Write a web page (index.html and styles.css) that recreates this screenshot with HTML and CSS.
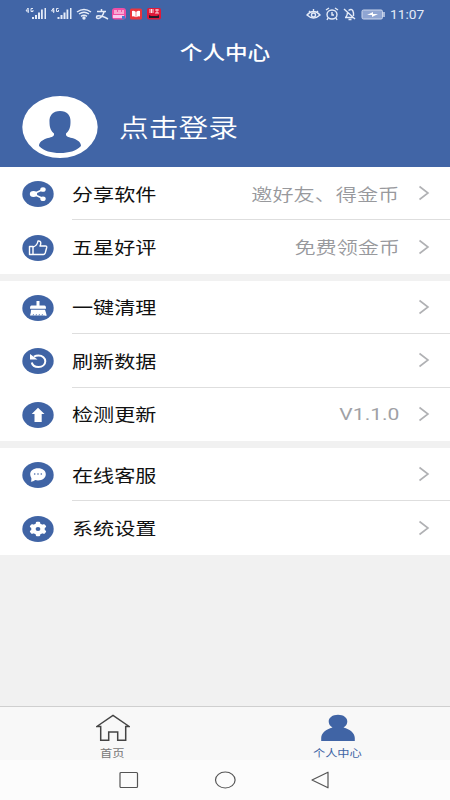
FILE: index.html
```html
<!DOCTYPE html>
<html lang="zh-CN">
<head>
<meta charset="utf-8">
<title>个人中心</title>
<link rel="stylesheet" href="styles.css">
</head>
<body>
<div class="phone">
  <header class="header">
    <div class="status">
      <svg class="status-left" width="140" height="16" viewBox="0 0 140 16">
        <g fill="#e4ebf8">
          <g id="signal">
            <path d="M7 11h2v2h-2zM10 9h2v4h-2zM13 6.500h2v6.500h-2zM16 3.500h1.800v9.500h-1.800zM19.500 2h1.500v11h-1.500z"/>
            <path d="M3 2 1 5h3M3.200 2v5M8 2.500h-2v3h2v-1.500" fill="none" stroke="#e4ebf8"/>
          </g>
          <use href="#signal" x="25.500"/>
          <circle cx="59" cy="12" r="1.700"/>
        </g>
        <path d="M52 6q7-5 14 0M54 8q5-3.500 10 0M56 10.300q3-2 6 0" fill="none" stroke="#e4ebf8" stroke-width="1.500"/>
        <path d="M72 5.500h9M76.500 3v2.500M79 6q-2 6-5.500 6.500-3 0-1.500-2.500 4-1 11 3" fill="none" stroke="#e4ebf8" stroke-width="1.500"/>
        <rect x="87" y="2" width="14" height="11.500" rx="3" fill="#ef4fa5"/>
        <path d="M89 5h3M93 5h3M97 5h2M89 7h10" stroke="#fff" stroke-width="1.200"/>
        <path d="M88 10.500h11" stroke="#f8c8ed" stroke-width="3"/>
        <path d="M97 10h3v3h-3z" fill="#4a78d0"/>
        <rect x="105" y="2.500" width="12" height="11" rx="1.500" fill="#e9363d"/>
        <path d="M107 5q2-.5 3.700.8v5.400q-2-1.200-3.700-.7zM115 5q-2-.5-3.700.8v5.400q2-1.200 3.700-.7z" fill="#fff"/>
        <rect x="122" y="2" width="14" height="11.500" rx="2" fill="#df1939"/>
        <path d="M124 4h5M124 6h5M126.500 3v4M130 4h4M130 7h4M132 3v4" stroke="#fff" stroke-width=".8"/>
        <path d="M124 12v-3l2 1h6l2-1v3z" fill="#201c2b"/>
      </svg>
      <div class="status-right">
        <svg width="80" height="16" viewBox="0 0 80 16">
          <g fill="none" stroke="#e4ebf8" stroke-width="1.400">
            <path d="M1 9q6.500-7 13 0-6.500 6-13 0zM3 5l1.500 1.500M7.500 3v2M12 5l-1.500 1.500"/>
            <circle cx="7.500" cy="9" r="2"/>
            <ellipse cx="26" cy="8.500" rx="5" ry="4.500"/>
            <path d="M26 6v3h2M20 4l3-2M29 2l3 2M22 12l-1 2M30 12l1 2M38 3l11 10M39 11.500h8M40 11q1.500-2 1.500-5M42.500 4.500q4-3 5 2.500v3M42.500 13.500h3"/>
          </g>
          <rect x="56" y="4" width="20.500" height="9" rx="1.500" fill="#8fa5d2" stroke="#cbd6ec"/>
          <path d="M61 9l6-3v2h5l-6 3v-2z" fill="#fff"/>
          <path d="M78 6v5" stroke="#cbd6ec" stroke-width="1.500"/>
        </svg>
        <span class="time">11:07</span>
      </div>
    </div>
    <h1 class="title"><span>个人中心</span></h1>
    <div class="login">
      <svg width="76" height="62" viewBox="0 0 76 62">
        <ellipse cx="38" cy="31" rx="37.700" ry="31" fill="#fff"/>
        <path class="brand" d="M38 15C31 15 27 19.500 27.500 26C27.500 32 29 35 32 37.500C32.500 40.500 30 41 26 42C21 43.500 17 46 17 50C22 55 29 57 38 57S54 55 59 50C59 46 55 43.500 50 42C46 41 43.500 40.500 44 37.500C47 35 48.500 32 48.500 26C49 19.500 45 15 38 15z"/>
      </svg>
      <span class="login-text">点击登录</span>
    </div>
  </header>

  <main class="groups">
    <section class="group">
      <div class="row">
        <svg class="icon" viewBox="0 0 32 26"><ellipse class="brand" cx="16" cy="13" rx="15.700" ry="13"/><path d="M21 8.500 11 13l10 4.500" fill="none" stroke="#fff" stroke-width="1.500"/><g fill="#fff"><ellipse cx="11.500" cy="13" rx="3.700" ry="3"/><ellipse cx="21" cy="8.500" rx="2.700" ry="2.300"/><ellipse cx="21" cy="17.700" rx="2.700" ry="2.300"/></g></svg>
        <div class="body"><span class="label">分享软件</span><span class="value">邀好友、得金币</span><svg class="chevron" viewBox="0 0 12 16"><path d="M1.500 1.500 10 8l-8.500 6.500"/></svg></div>
      </div>
      <div class="row">
        <svg class="icon" viewBox="0 0 32 26"><ellipse class="brand" cx="16" cy="13" rx="15.700" ry="13"/><path d="M7.500 11.500h3.500v8h-3.500zM11 12c3-1 4.500-3 5-6 3-.5 3.500 2 2 5h5.500q1.500 0 1.200 1.500l-1.500 5.500q-.5 1.500-2 1.500H11" fill="none" stroke="#fff" stroke-width="1.400" stroke-linejoin="round"/></svg>
        <div class="body"><span class="label">五星好评</span><span class="value">免费领金币</span><svg class="chevron" viewBox="0 0 12 16"><path d="M1.500 1.500 10 8l-8.500 6.500"/></svg></div>
      </div>
    </section>

    <section class="group">
      <div class="row">
        <svg class="icon" viewBox="0 0 32 26"><ellipse class="brand" cx="16" cy="13" rx="15.700" ry="13"/><path d="M14.500 6h3v4.500h5q1.500 0 1.500 3.200H8q0-3.200 1.500-3.200h5zM9 14.700h14q1 3 1.700 5.800-1 .6-2.200 0H8q1-3 1-5.800z" fill="#fff"/><path class="bristles" d="M11 20.500l.6-1.500M14 20.500l.5-1.500M17 20.500l.5-1.500M20 20.500l.5-1.500"/></svg>
        <div class="body"><span class="label">一键清理</span><svg class="chevron" viewBox="0 0 12 16"><path d="M1.500 1.500 10 8l-8.500 6.500"/></svg></div>
      </div>
      <div class="row">
        <svg class="icon" viewBox="0 0 32 26"><ellipse class="brand" cx="16" cy="13" rx="15.700" ry="13"/><path d="M12 8.700q2-1.200 4.500-1.200c4 0 6.800 2.600 6.800 5.800s-2.800 5.700-6.800 5.700c-3.500 0-6.200-1.700-6.700-4.500" fill="none" stroke="#fff" stroke-width="2"/><path d="M8 6v5.500h7.500z" fill="#fff"/></svg>
        <div class="body"><span class="label">刷新数据</span><svg class="chevron" viewBox="0 0 12 16"><path d="M1.500 1.500 10 8l-8.500 6.500"/></svg></div>
      </div>
      <div class="row">
        <svg class="icon" viewBox="0 0 32 26"><ellipse class="brand" cx="16" cy="13" rx="15.700" ry="13"/><path d="M16 5.700 22.500 12H19.700v8h-7.200v-8H9.700z" fill="#fff"/></svg>
        <div class="body"><span class="label">检测更新</span><span class="value version">V1.1.0</span><svg class="chevron" viewBox="0 0 12 16"><path d="M1.500 1.500 10 8l-8.500 6.500"/></svg></div>
      </div>
    </section>

    <section class="group">
      <div class="row">
        <svg class="icon" viewBox="0 0 32 26"><ellipse class="brand" cx="16" cy="13" rx="15.700" ry="13"/><path d="M16 6.300c4.700 0 7.800 2.500 7.800 6s-3.300 6.200-7.800 6.200q-1.500 0-2.700-.4-2 1.700-4.500 1.700.8-1.500.6-3.500Q8.200 14.500 8.200 12.300c0-3.500 3.300-6 7.800-6z" fill="#fff"/><g class="brand"><circle cx="12.700" cy="12" r=".8"/><circle cx="16" cy="12" r=".8"/><circle cx="19.300" cy="12" r=".8"/></g></svg>
        <div class="body"><span class="label">在线客服</span><svg class="chevron" viewBox="0 0 12 16"><path d="M1.500 1.500 10 8l-8.500 6.500"/></svg></div>
      </div>
      <div class="row">
        <svg class="icon" viewBox="0 0 32 26"><ellipse class="brand" cx="16" cy="13" rx="15.700" ry="13"/><g transform="translate(16 13) scale(1.200 1)" fill="#fff"><circle r="5.700"/><g id="teeth"><rect x="-1.800" y="-7.200" width="3.600" height="14.400" rx="1"/></g><use href="#teeth" transform="rotate(60)"/><use href="#teeth" transform="rotate(120)"/><circle class="brand" r="2"/></g></svg>
        <div class="body"><span class="label">系统设置</span><svg class="chevron" viewBox="0 0 12 16"><path d="M1.500 1.500 10 8l-8.500 6.500"/></svg></div>
      </div>
    </section>
  </main>

  <nav class="tabs">
    <div class="tab">
      <svg width="34" height="28" viewBox="0 0 34 28"><path d="M.8 12.500 17 1.500l16.200 11h-3.500v13.700h-8V18h-9v8.200h-8V12.500z" fill="none" stroke="#444" stroke-width="1.500"/></svg>
      <span>首页</span>
    </div>
    <div class="tab active">
      <svg width="34" height="28" viewBox="0 0 34 28"><path class="brand" d="M17 .7c5.500 0 9.300 2.800 9.300 6.800 0 2.500-1.300 4.500-3.800 6 6.500 1.700 11.300 5.500 11.300 10.500V27H.2v-3c0-5 4.800-8.800 11.300-10.500-2.500-1.500-3.800-3.500-3.800-6C7.700 3.500 11.500.7 17 .7z"/></svg>
      <span>个人中心</span>
    </div>
  </nav>
  <footer class="system-nav">
    <svg width="212" height="18" viewBox="0 0 212 18" fill="none" stroke="#555" stroke-width="1.200">
      <rect x="1" y="1.500" width="17.500" height="15" rx="1"/>
      <ellipse cx="106.300" cy="9" rx="9.800" ry="8"/>
      <path d="M193 9l16-7.800v15.600z" stroke-linejoin="round"/>
    </svg>
  </footer>
</div>
</body>
</html>
```

FILE: styles.css
```css
* { box-sizing: border-box; }

body {
  margin: 0;
  font-family: Roboto, "Noto Sans CJK SC", sans-serif;
  color: #111;
}

svg { display: block; flex: none; }

.brand { fill: #4064a5; }

.phone {
  display: flex;
  flex-direction: column;
  width: 450px;
  height: 800px;
  overflow: hidden;
  background: #f1f1f1;
}

.header {
  flex: none;
  height: 167px;
  background: #4165a6;
  color: #fff;
}

.status {
  display: flex;
  justify-content: space-between;
  height: 28px;
  padding: 6px 26px 0 25px;
}

.status-right { display: flex; gap: 4px; }

.time {
  width: 34px;
  font-size: 12.5px;
  line-height: 17px;
  color: #e4ebf8;
  white-space: nowrap;
  transform: scaleX(1.1);
  transform-origin: left;
}

.title {
  display: flex;
  justify-content: center;
  margin: 0;
  height: 50px;
  font-size: 19px;
  font-weight: 500;
  line-height: 51px;
}

.title span { transform: scaleX(1.19); }

.login {
  display: flex;
  align-items: center;
  gap: 21px;
  padding: 18px 0 0 22px;
}

.login-text {
  padding-top: 4px;
  font-size: 25px;
  font-weight: 350;
  line-height: 36px;
  transform: scaleX(1.19);
  transform-origin: left;
}

.groups {
  display: flex;
  flex-direction: column;
  gap: 7px;
  flex: 1;
}

.group { background: #fff; }

.row {
  display: flex;
  align-items: center;
  gap: 18px;
  height: 53.4px;
  padding-left: 22px;
}

.icon { width: 32px; height: 26px; margin-top: 1px; }

.body {
  display: flex;
  align-items: center;
  flex: 1;
  height: 100%;
  padding-right: 20px;
  border-bottom: 1.5px solid #dedede;
}

.row:last-child .body { border-bottom-color: transparent; }

.label,
.value {
  padding-top: 3px;
  font-size: 17.6px;
  line-height: 26px;
  transform: scaleX(1.2);
}

.label { transform-origin: left; }

.value {
  margin-left: auto;
  margin-right: 18.5px;
  font-weight: 350;
  color: #98999d;
  transform-origin: right;
}

.version {
  padding-top: 0;
  font-size: 17px;
  font-weight: 400;
  color: #a0a1a5;
  transform: scaleX(1.24);
}

.chevron {
  width: 12px;
  height: 16px;
  margin-left: auto;
  fill: none;
  stroke: #b0b1b4;
  stroke-width: 1.6;
}

.value + .chevron { margin-left: 0; }

.bristles { fill: none; stroke: #4064a5; stroke-width: .7; }

.tabs {
  display: flex;
  height: 54px;
  flex: none;
  background: #f8f8f8;
  border-top: 1px solid #cfcfcf;
}

.tab {
  display: flex;
  flex-direction: column;
  align-items: center;
  flex: 1;
  padding-top: 7px;
  color: #777;
}

.tab span {
  margin-top: 4px;
  font-size: 10.2px;
  line-height: 16px;
  transform: scaleX(1.2);
}

.active { color: #4064a5; }

.system-nav {
  display: flex;
  justify-content: center;
  flex: none;
  height: 40px;
  padding: 11px 0 0;
  background: #fcfcfc;
}
```
